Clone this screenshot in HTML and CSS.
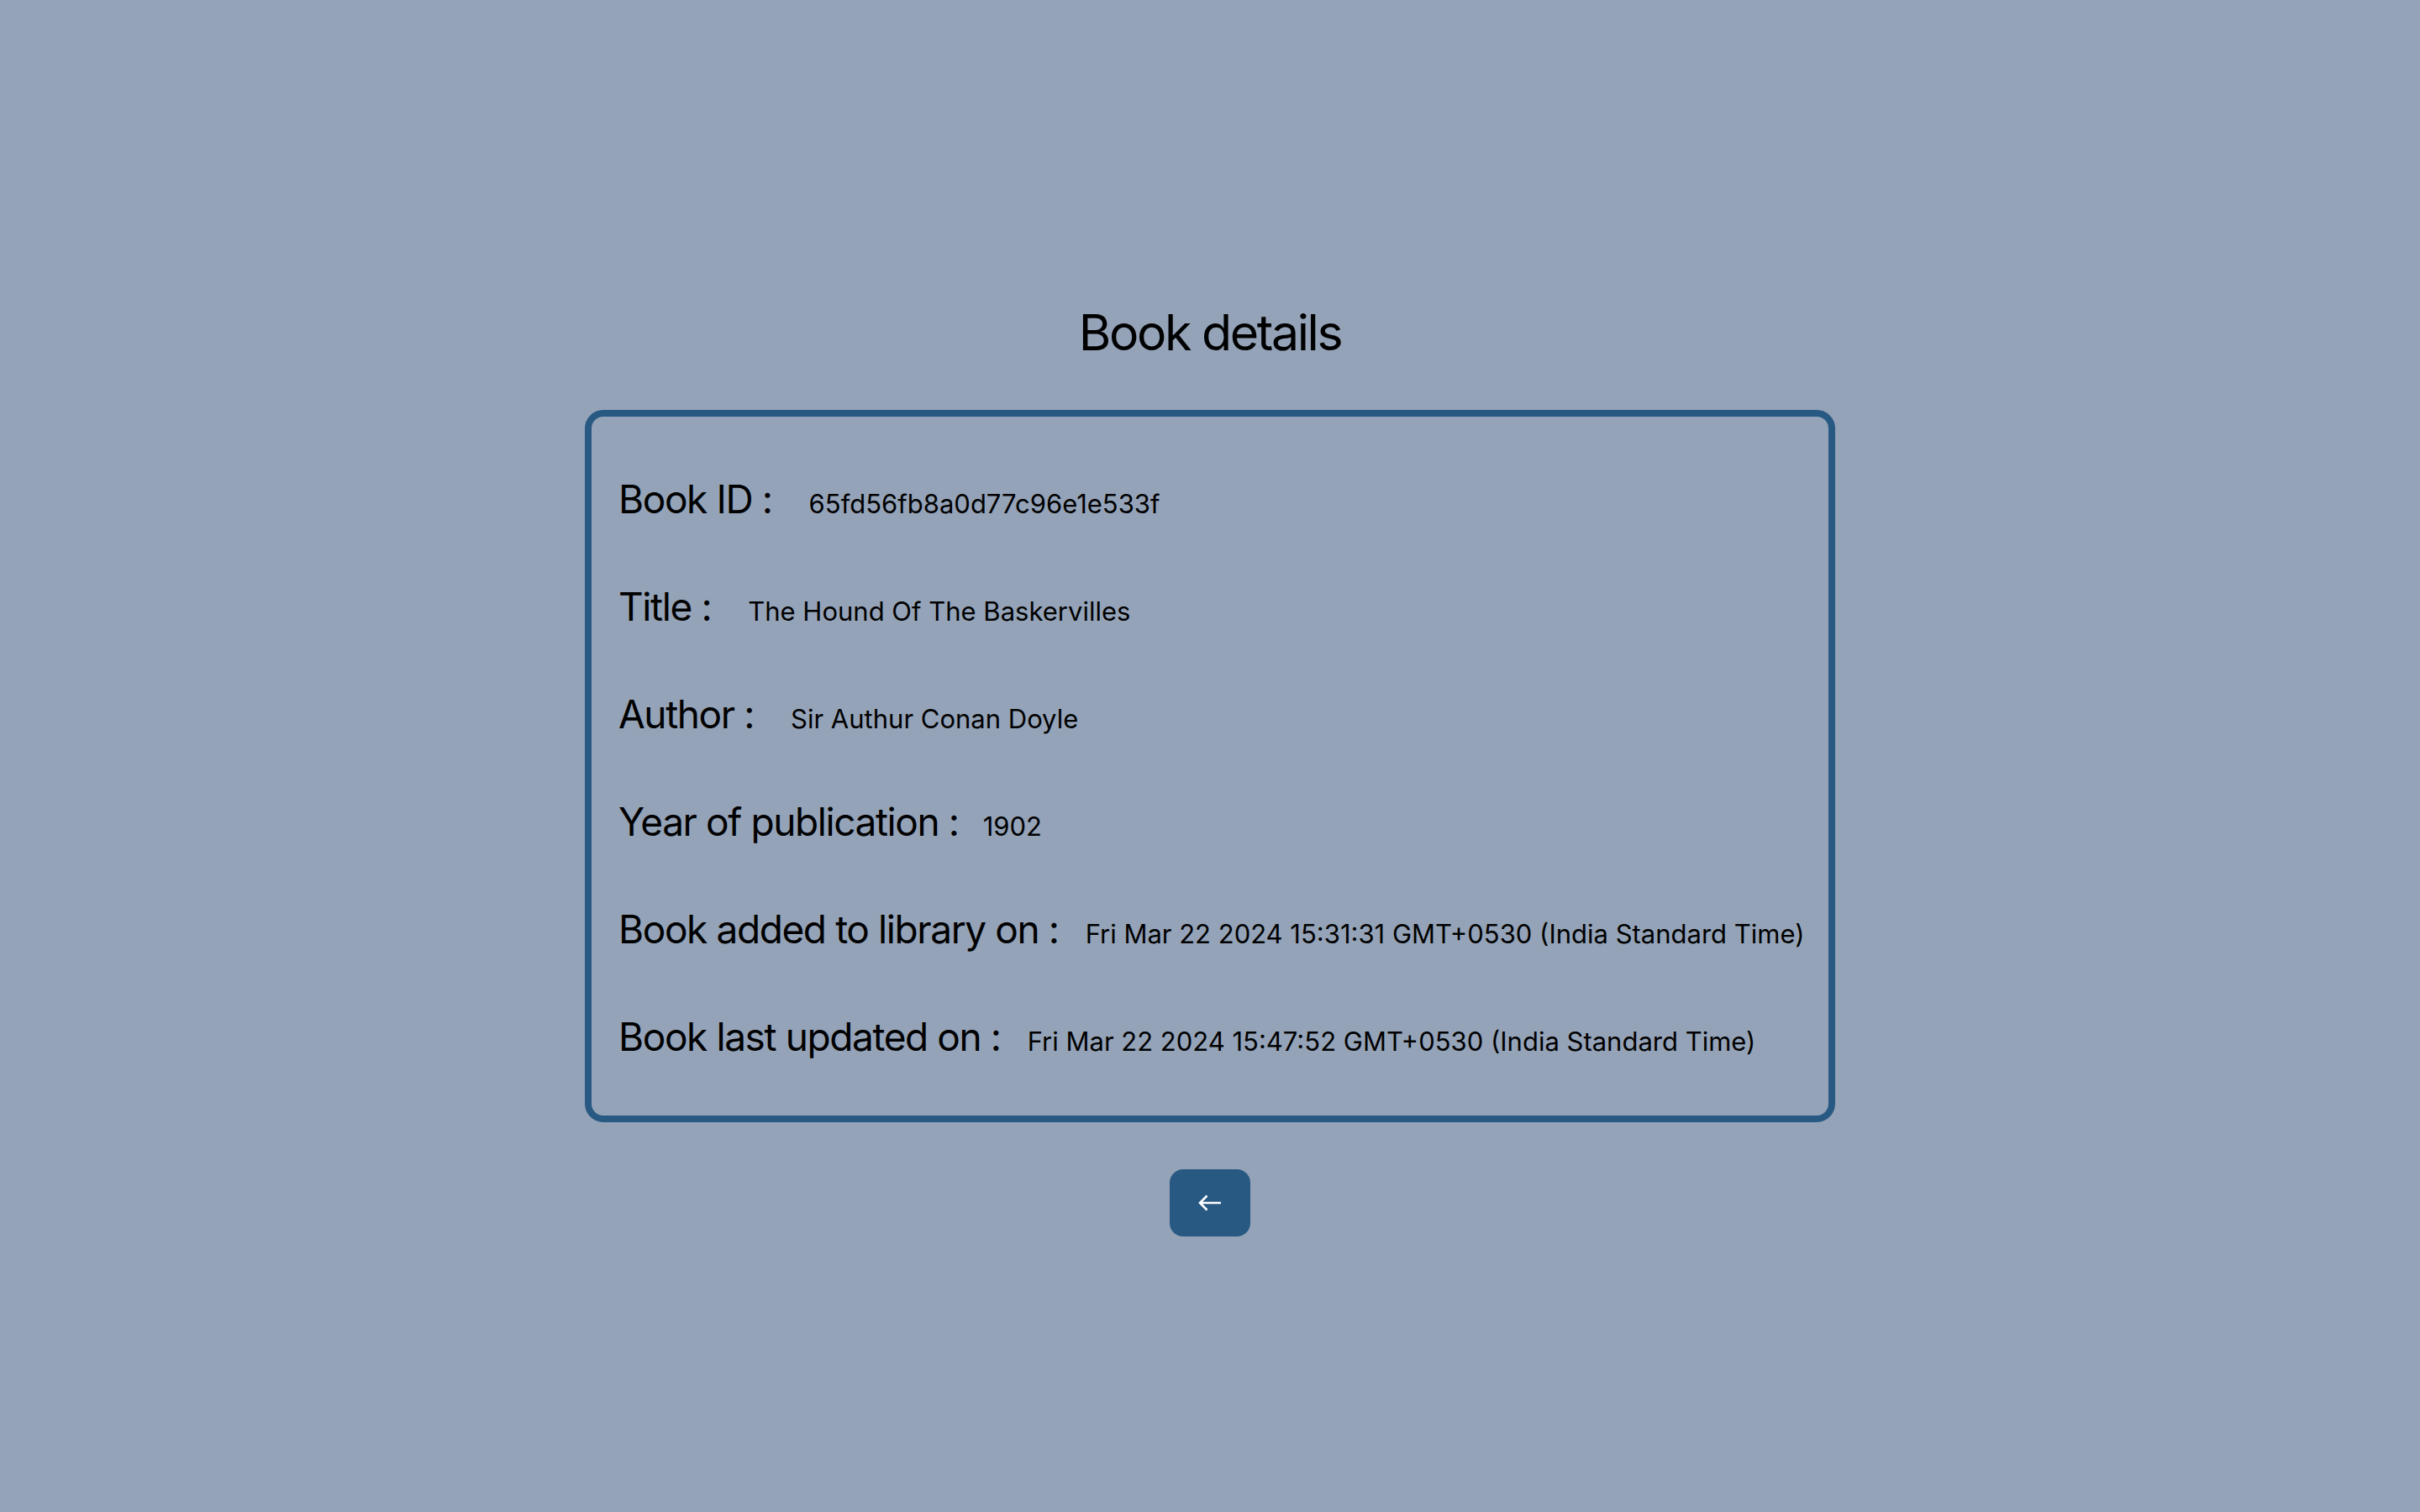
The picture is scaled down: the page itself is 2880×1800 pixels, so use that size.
FILE: index.html
```html
<!DOCTYPE html>
<html lang="en">
<head>
<meta charset="utf-8">
<title>Book details</title>
<link rel="stylesheet" href="styles.css">
</head>
<body>
<main class="page">
  <h1 class="heading">Book details</h1>
  <section class="card">
    <div class="row gap-l"><span class="label">Book ID :</span><span class="value">65fd56fb8a0d77c96e1e533f</span></div>
    <div class="row gap-l"><span class="label">Title :</span><span class="value">The Hound Of The Baskervilles</span></div>
    <div class="row gap-l"><span class="label">Author :</span><span class="value">Sir Authur Conan Doyle</span></div>
    <div class="row gap-s"><span class="label">Year of publication :</span><span class="value">1902</span></div>
    <div class="row gap-m"><span class="label">Book added to library on :</span><span class="value">Fri Mar 22 2024 15:31:31 GMT+0530 (India Standard Time)</span></div>
    <div class="row gap-m"><span class="label">Book last updated on :</span><span class="value">Fri Mar 22 2024 15:47:52 GMT+0530 (India Standard Time)</span></div>
  </section>
  <button class="back" type="button" aria-label="Back">
    <svg class="back-icon" viewBox="0 0 28 20" width="28" height="20"><path d="M27 10H2.5M10.5 1.5L2 10l8.5 8.5" fill="none" stroke="#fff" stroke-width="2.6"/></svg>
  </button>
</main>
</body>
</html>
```
FILE: styles.css
```css
html, body {
  margin: 0;
  padding: 0;
}
body {
  background: #94a3b8;
  color: #000;
  font-family: Inter, "Noto Sans", sans-serif;
  min-height: 1800px;
}
.page {
  display: flex;
  flex-direction: column;
  align-items: center;
  padding-top: 356px;
}
.heading {
  margin: 0 0 52px;
  font-size: 59px;
  line-height: 80px;
  font-weight: 400;
  letter-spacing: -2.4px;
}
.card {
  box-sizing: border-box;
  width: 1488px;
  border: 8px solid #285983;
  border-radius: 22px;
  padding: 66px 32px 62px;
  display: flex;
  flex-direction: column;
  gap: 64px;
}
.row {
  display: flex;
  align-items: baseline;
  height: 64px;
  white-space: nowrap;
}
.label {
  font-size: 46px;
  line-height: 64px;
  letter-spacing: -1.4px;
}
.value {
  font-size: 31px;
  line-height: 32px;
}
.gap-l .value { margin-left: 44px; }
.gap-m .value { margin-left: 32px; }
.gap-s .value { margin-left: 29px; }
.back {
  margin-top: 56px;
  width: 96px;
  height: 80px;
  border: 0;
  border-radius: 16px;
  background: #285983;
  display: flex;
  align-items: center;
  justify-content: center;
  padding: 0;
  cursor: pointer;
}
.back-icon {
  display: block;
}
```
